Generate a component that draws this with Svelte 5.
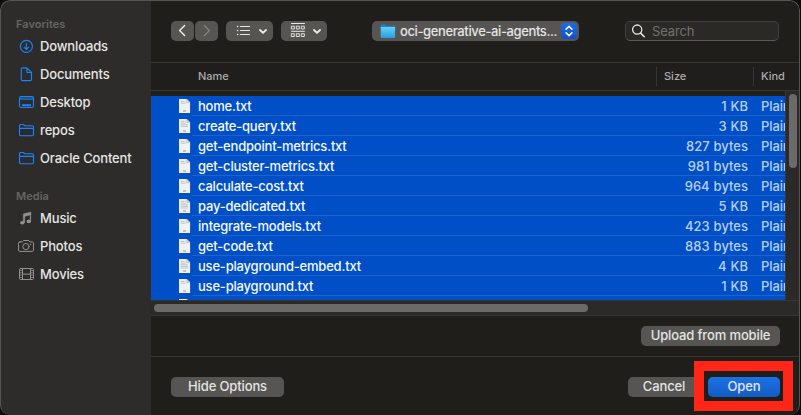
<script>
  const favorites = [
    { name: 'Downloads', icon: 'download' },
    { name: 'Documents', icon: 'document' },
    { name: 'Desktop', icon: 'desktop' },
    { name: 'repos', icon: 'folder' },
    { name: 'Oracle Content', icon: 'folder' }
  ];
  const media = [
    { name: 'Music', icon: 'music' },
    { name: 'Photos', icon: 'camera' },
    { name: 'Movies', icon: 'film' }
  ];
  const files = [
    { name: 'home.txt', size: '1 KB', lines: 1 },
    { name: 'create-query.txt', size: '3 KB', lines: 3 },
    { name: 'get-endpoint-metrics.txt', size: '827 bytes', lines: 1 },
    { name: 'get-cluster-metrics.txt', size: '981 bytes', lines: 1 },
    { name: 'calculate-cost.txt', size: '964 bytes', lines: 1 },
    { name: 'pay-dedicated.txt', size: '5 KB', lines: 4 },
    { name: 'integrate-models.txt', size: '423 bytes', lines: 1 },
    { name: 'get-code.txt', size: '883 bytes', lines: 1 },
    { name: 'use-playground-embed.txt', size: '4 KB', lines: 4 },
    { name: 'use-playground.txt', size: '1 KB', lines: 1 },
    { name: '', size: '', lines: 1 }
  ];
</script>

{#snippet sideIcon(kind)}
  <svg class="side-icon" width="18" height="16" viewBox="0 0 18 16" fill="none" stroke="currentColor" stroke-width="1.1" stroke-linecap="round" stroke-linejoin="round">
    {#if kind === 'download'}
      <circle cx="8.4" cy="8.4" r="6" />
      <path d="M8.4 5.2v6.2M6.1 9.2l2.3 2.3 2.3-2.3" />
    {:else if kind === 'document'}
      <path d="M4.5 1.9h4.3l4.7 4.6v6.9q0 1.2-1.2 1.2H4.5q-1.2 0-1.2-1.2V3.1Q3.3 1.9 4.5 1.9zM8.8 1.9v3.5q0 1.1 1.1 1.1h3.6" />
    {:else if kind === 'desktop'}
      <rect x="1.5" y="2.5" width="14" height="11" rx="1.6" />
      <path d="M2 3.2h13v1.9H2z" fill="currentColor" fill-opacity=".45" stroke="none" />
      <path d="M2 5.3h13" stroke-width=".8" />
      <path d="M4 10.2h9v2H4z" fill="currentColor" stroke="none" />
    {:else if kind === 'folder'}
      <path d="M1.5 12.5V3.7q0-1.2 1.2-1.2h2.6l1.6 1.2h7.2q1.4 0 1.4 1.3v7.5q0 1.2-1.2 1.2H2.7q-1.2 0-1.2-1.2zM1.5 6.4h14" />
    {:else if kind === 'music'}
      <path d="M5.6 3.8 12.9 2v2.8L6.6 6.4v6H5.6z" fill="currentColor" stroke-width=".4" />
      <path d="M6 4.6v7.7M12.5 3.2v7.8" />
      <ellipse cx="4.3" cy="12.8" rx="2.2" ry="1.8" fill="currentColor" stroke="none" />
      <ellipse cx="10.8" cy="11.4" rx="2.2" ry="1.8" fill="currentColor" stroke="none" />
    {:else if kind === 'camera'}
      <path d="M1.9 3.9h2.4l1.1-1.4h5.4l1.1 1.4h2.2q1.4 0 1.4 1.3v6.9q0 1.3-1.3 1.3H1.8q-1.3 0-1.3-1.3V5.2q0-1.3 1.4-1.3z" stroke-width="1" />
      <circle cx="7.9" cy="8.6" r="3.1" stroke-width="1" />
      <circle cx="12.6" cy="6.2" r=".7" fill="currentColor" stroke="none" />
    {:else}
      <rect x="1.5" y="2.5" width="14" height="11" rx="1.2" stroke-width="1" />
      <path d="M4.5 3v10.4M12.5 3v10.4M4.5 8.1h8" stroke-width="1" />
      <path d="M3 4v9M14 4v9" stroke-width="1.4" stroke-dasharray="1 1.3" stroke-linecap="butt" />
    {/if}
  </svg>
{/snippet}

{#snippet entry(item)}
  <div class="entry">{@render sideIcon(item.icon)}<span>{item.name}</span></div>
{/snippet}

<div class="desk">
  <div class="window">
    <aside>
      <h2>Favorites</h2>
      {#each favorites as item}{@render entry(item)}{/each}
      <h2 class="second">Media</h2>
      <div class="media">
        {#each media as item}{@render entry(item)}{/each}
      </div>
    </aside>

    <main>
      <header>
        <div class="ctl nav">
          <svg width="23" height="20" viewBox="0 0 23 20"><path d="M13.6 4.6 8.6 9.6l5 5" fill="none" stroke="#f0f0ef" stroke-width="1.4" stroke-linecap="round" stroke-linejoin="round" /></svg>
        </div>
        <div class="ctl nav fwd">
          <svg width="23" height="20" viewBox="0 0 23 20"><path d="M9.4 4.6l5 5-5 5" fill="none" stroke="#888785" stroke-width="1.3" stroke-linecap="round" stroke-linejoin="round" /></svg>
        </div>
        <div class="ctl list">
          <svg width="47" height="20" viewBox="0 0 47 20" fill="none" stroke="#e8e8e7" stroke-linecap="round" stroke-linejoin="round">
            <path d="M14.5 5.5h9M14.5 9.5h9M14.5 13.5h9" stroke-width="1.1" />
            <path d="M11.5 5.5h.3M11.5 9.5h.3M11.5 13.5h.3" stroke-width="1.3" />
            <path d="M34 9l3 2.9L40 9" stroke-width="1.9" />
          </svg>
        </div>
        <div class="ctl group">
          <svg width="46" height="20" viewBox="0 0 46 20" fill="none" stroke="#e8e8e7" stroke-linecap="round" stroke-linejoin="round">
            <path d="M10.5 2.5h13M10.5 10.3h13" stroke-width="1" />
            <path d="M10.7 5.2h2.6v2.8h-2.6zM15.7 5.2h2.6v2.8h-2.6zM20.7 5.2h2.6v2.8h-2.6zM10.7 12.7h2.6v2.8h-2.6zM15.7 12.7h2.6v2.8h-2.6zM20.7 12.7h2.6v2.8h-2.6z" stroke-width=".95" />
            <path d="M33 9l3 2.9L39 9" stroke-width="1.9" />
          </svg>
        </div>
        <div class="ctl path">
          <svg width="16" height="16" viewBox="0 0 16 16">
            <defs><linearGradient id="fold" x1="0" y1="0" x2="0" y2="1"><stop offset="0" stop-color="#62d0fb" /><stop offset="1" stop-color="#239fdd" /></linearGradient></defs>
            <path d="M.7 2.7q0-1.2 1.1-1.2H5l1.3 1.2h7.6q1.2 0 1.2 1.1V5H.7z" fill="#1b87bd" />
            <path d="M.7 4h14.4v10.1q0 1-1 1H1.7q-1 0-1-1z" fill="url(#fold)" />
          </svg>
          <span>oci-generative-ai-agents...</span>
          <div class="stepper">
            <svg width="16" height="16" viewBox="0 0 16 16" fill="none" stroke="#fff" stroke-width="1.5" stroke-linecap="round" stroke-linejoin="round"><path d="M5 6.2 8 3.4l3 2.8M5 9.8l3 2.8 3-2.8" /></svg>
          </div>
        </div>
        <div class="search">
          <svg width="14" height="14" viewBox="0 0 14 14" fill="none" stroke="#e4e4e3" stroke-width="1.3" stroke-linecap="round"><circle cx="5.2" cy="5.6" r="4.6" /><path d="M8.7 9.1l3.5 3.6" stroke-width="1.6" /></svg>
          <span>Search</span>
        </div>
      </header>

      <div class="columns">
        <span class="c-name">Name</span>
        <span class="c-size">Size</span>
        <span class="c-kind">Kind</span>
      </div>

      <div class="table">
        <div class="rows">
          {#each files as f}
            <div class="row">
              <svg width="12" height="16" viewBox="0 0 12 16">
                <path d="M0 1h7.7L11.1 4.3V15H0z" fill="#f1f1f1" />
                <path d="M7.6 1v3.4h3.5z" fill="#c2cce0" />
                <path d="M7.2 1.2v3.5h3.6" fill="none" stroke="#b9bcc4" stroke-width=".5" />
                <path d="M1.6 3.4h4" stroke="#aaa" stroke-width=".7" />
                {#each Array(f.lines) as _, i}
                  <path d={`M1.6 ${5.2 + i * 1.6}h${i ? 7.5 : 5}`} stroke="#b0b0b0" stroke-width=".7" />
                {/each}
                <path d="M4 13h3" stroke="#888" stroke-width=".9" />
              </svg>
              <div class="cells">
                <span class="fname">{f.name}</span>
                <span class="fsize">{f.size}</span>
                <span class="fkind">{f.name ? 'Plain' : ''}</span>
              </div>
            </div>
          {/each}
        </div>
        <div class="vbar"><div class="vthumb"></div></div>
      </div>
      <div class="hbar"><div class="hthumb"></div></div>

      <div class="options"><div class="btn upload"><span>Upload from mobile</span></div></div>

      <footer>
        <div class="btn hide"><span>Hide Options</span></div>
        <div class="btn cancel"><span>Cancel</span></div>
        <div class="btn open"><span>Open</span></div>
        <div class="marker"></div>
      </footer>
    </main>
  </div>
</div>

<style>
  .desk, .desk * { box-sizing: border-box; }
  .desk {
    width: 801px; height: 415px; overflow: hidden; background: #0c0c0c;
    font: 500 13px/20px Inter, "Liberation Sans", sans-serif; color: #e4e4e3;
    white-space: nowrap; cursor: default;
  }
  .window {
    position: relative; display: flex; width: 800px; height: 415px;
    border-radius: 10px; overflow: hidden; background: #1f1e1b;
  }
  .window::after {
    content: ''; position: absolute; inset: 0; border: 1px solid #555552;
    border-bottom-width: 0; border-radius: 10px; pointer-events: none;
  }
  svg { display: block; flex: none; }
  aside { width: 151px; flex: none; background: #2d2c2a; padding-top: 14px; }
  h2 { margin: 0 0 -2px; padding-left: 16px; height: 20px; font-size: 11px; line-height: 20px; font-weight: 600; color: #666563; letter-spacing: .05px; }
  h2.second { margin-top: 14px; }
  .entry { display: flex; align-items: center; height: 28px; padding-left: 18px; color: #1a84ff; }
  .entry span { margin-left: 4px; color: #e6e6e5; letter-spacing: -0.15px; }
  .media .entry { color: #92918f; }
  .media .entry span { color: #e6e6e5; }

  main { flex: 1; min-width: 0; display: flex; flex-direction: column; }
  header { display: flex; height: 63px; padding: 21px 21px 0 20px; border-bottom: 1px solid #373634; }
  .ctl { height: 20px; background: #565553; border-radius: 5px; flex: none; }
  .nav { width: 23px; }
  .fwd { margin-left: 1px; }
  .list { width: 47px; margin-left: 8px; }
  .group { width: 46px; margin-left: 8px; }
  .path { display: flex; align-items: center; width: 207px; margin-left: 45px; padding: 0 2px 0 8px; }
  .path span { margin-left: 4px; letter-spacing: -0.38px; }
  .stepper { width: 16px; height: 16px; margin-left: auto; border-radius: 4px; background: linear-gradient(#1f6bea, #1251c8); flex: none; }
  .search { display: flex; align-items: center; width: 154px; height: 20px; margin-left: 46px; padding-left: 6px; border: 1px solid #41403e; border-bottom-color: #5a5957; border-radius: 5px; background: #2a2927; color: #72716f; font-weight: 400; }
  .search span { margin-left: 6px; letter-spacing: -0.15px; }

  .columns { display: flex; align-items: center; height: 28px; border-bottom: 1px solid #373634; font-size: 11px; color: #adacaa; background: #1f1e1c; }
  .columns span { height: 19px; line-height: 19px; }
  .c-name { width: 505px; padding-left: 47px; }
  .c-size { width: 97px; padding-left: 7px; border-left: 1px solid #373634; }
  .c-kind { padding-left: 7px; border-left: 1px solid #373634; }

  .table { display: flex; height: 209px; }
  .rows { width: 634px; margin-top: 5px; height: 204px; overflow: hidden; background: #004fc7; }
  .row { display: flex; align-items: center; height: 20px; padding-left: 28px; }
  .cells { display: flex; flex: 1; min-width: 0; margin-left: 1px; height: 20px; padding-left: 6px; border-bottom: 1px solid #1d62cd; color: #f7f9fd; }
  .fname { width: 450px; flex: none; letter-spacing: -0.2px; }
  .fsize { width: 100px; flex: none; text-align: right; color: #b6cef1; word-spacing: .5px; }
  .fkind { width: 24px; flex: none; margin-left: 13px; overflow: hidden; color: #b6cef1; letter-spacing: -0.1px; }
  .vbar { width: 15px; background: #2b2a28; border-left: 1px solid #373634; padding: 3px 0 0 3px; }
  .vthumb { width: 8px; height: 74px; border-radius: 4px; background: #6b6a68; }
  .hbar { height: 16px; background: #2b2a28; border-bottom: 1px solid #373634; border-top: 1px solid #373634; padding: 3px 0 0 3px; }
  .hthumb { width: 434px; height: 8px; border-radius: 4px; background: #6b6a68; }

  .options { display: flex; justify-content: flex-end; height: 41px; padding: 10px 20px 0 0; border-bottom: 1px solid #373634; }
  .btn { height: 20px; border-radius: 5px; background: #565553; text-align: center; line-height: 19px; flex: none; letter-spacing: -0.13px; }
  .upload { width: 139px; }
  footer { position: relative; display: flex; flex: 1; padding: 20px 20px 0; }
  .hide { width: 113px; }
  .cancel { width: 72px; margin-left: auto; }
  .open { width: 72px; margin-left: 8px; background: linear-gradient(#1b72e6, #145cc2); }
  .marker { position: absolute; left: 543px; top: 4px; width: 99px; height: 50px; border: 10px solid #ff2617; }
</style>
